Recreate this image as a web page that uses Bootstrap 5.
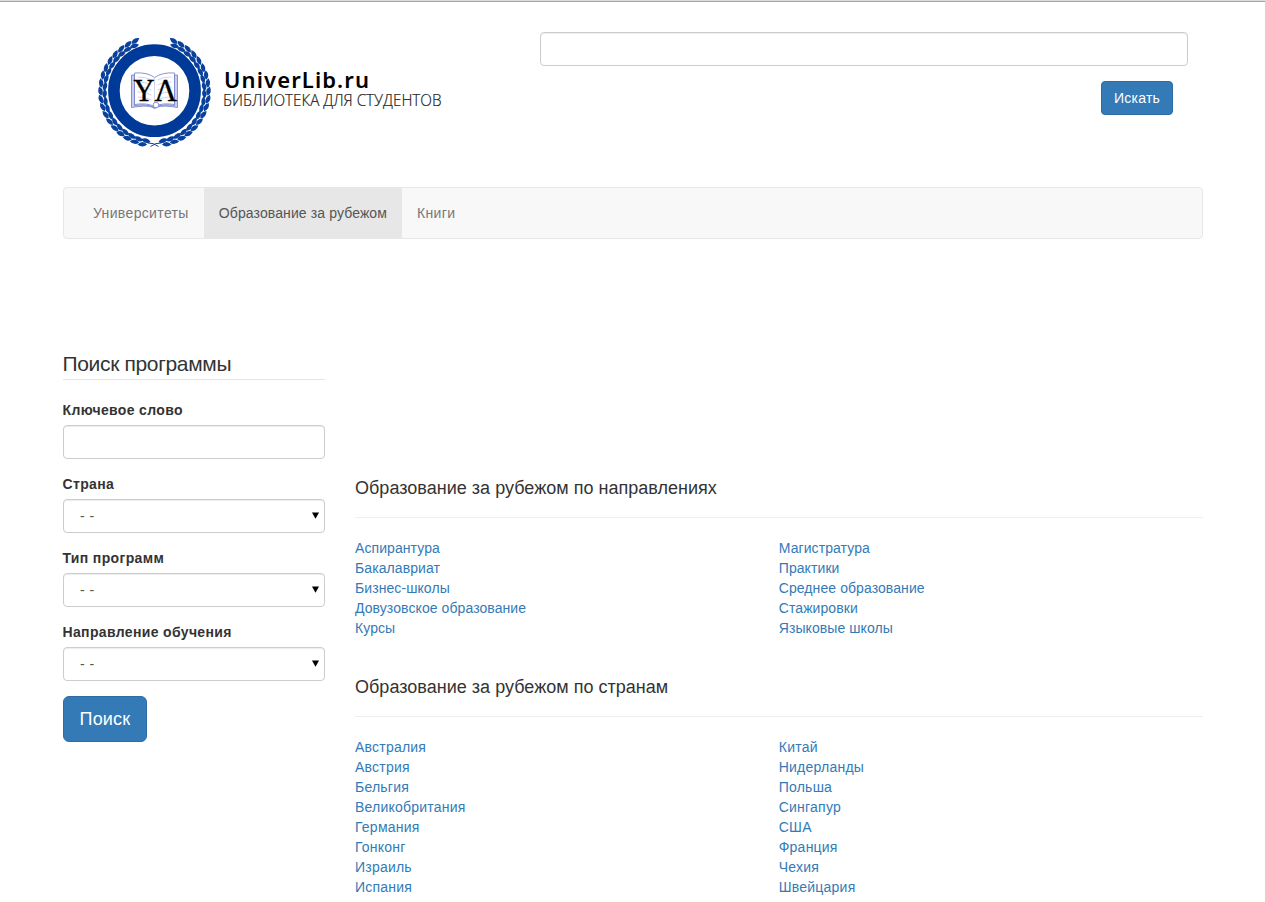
<!DOCTYPE html>
<html lang="ru">
<head>
<meta charset="utf-8">
<title>UniverLib.ru</title>
<meta name="viewport" content="width=device-width, initial-scale=1">
<link href="https://cdn.jsdelivr.net/npm/bootstrap@5.3.0/dist/css/bootstrap.min.css" rel="stylesheet">
<style>
html{overflow:hidden}
body{font:14px/20px "Liberation Sans",Arial,sans-serif;color:#333;letter-spacing:.35px;border-top:1px solid #dcdcdc;height:902px;overflow:hidden}
.topline{height:1px;background:#a5a5a5}
.container{max-width:1170px;--bs-gutter-x:30px}
.site-head{height:185px;padding-top:30px}
.logo{width:400px;height:125px;display:block}
.search-col{width:678px}
.search-field{padding:0 14.5px 0 15px}
.search-action{margin-top:15px;padding-right:29.5px}
.form-control,.form-select{height:34px;font-size:14px;line-height:20px;padding:6px 12px;border:1px solid #ccc;border-radius:4px;box-shadow:inset 0 1px 1px rgba(0,0,0,.075);color:#555}
.form-select{padding-left:16.500px;word-spacing:1px;background-image:url("data:image/svg+xml,%3Csvg xmlns='http://www.w3.org/2000/svg' viewBox='0 0 7 7'%3E%3Cpath d='M0 .5h7L3.5 6.8z'/%3E%3C/svg%3E");background-size:7px 7px;background-position:right 5px top 12px}
.btn-primary{--bs-btn-bg:#337ab7;--bs-btn-border-color:#2e6da4;font-size:14px;line-height:20px;padding:6px 12px;border-radius:4px;letter-spacing:.2px}
.btn-primary.btn-lg{font-size:18px;line-height:24px;padding:10px 16px;border-radius:6px;width:84px;height:46px;letter-spacing:.2px}
.main-nav{height:52px;background:#f8f8f8;border:1px solid #e7e7e7;border-radius:4px;padding:0 14.5px}
.main-nav .nav-link{padding:15px;color:#777;height:50px}
.main-nav .nav-link.active{background:#e7e7e7;color:#555;letter-spacing:.11px}
.content-row{padding-top:112px;--bs-gutter-x:30px}
.side-col{width:292.5px}
.main-col{width:877.5px;padding-top:124px}
h1{font-size:21px;line-height:25px;font-weight:400;border-bottom:1px solid #e5e5e5;height:29px;letter-spacing:-.34px;margin-bottom:20px}
.form-label{font-weight:700;margin-bottom:5px;display:block}
.field{margin-bottom:15px}
h2{font-size:18px;line-height:26px;font-weight:400;margin:0;height:43px;border-bottom:1px solid #eee;letter-spacing:.02px}
.links{margin-top:20px;margin-bottom:36px;letter-spacing:.22px}
.links.programs{letter-spacing:.08px}
.links a{color:#337ab7;text-decoration:none;display:block}
</style>
</head>
<body>
<div class="topline"></div>
<div class="container">
 <header class="site-head d-flex justify-content-between">
  <a href="#" class="ms-4"><svg class="logo" viewBox="86.5 32 400 125">
   <g id="laurel" fill="#0a419c"></g>
   <circle cx="154" cy="90.7" r="40.6" fill="#fff" stroke="#003a99" stroke-width="11.6"/>
   <g stroke="#6f7ac9" stroke-width=".8" fill="#fff">
    <path d="M134 75h-3v32.500q14-2.500 20.500-.5 2.500 3 5 0 7-2 20.500.5V75h-3v30.500q-12-2-20 2-8-4-20-2z" fill="#c9cdf0"/>
    <path d="M134 73q13-1 20 4.500 8-5.500 20-4.500v31.500q-12-2-20 2-8-4-20-2z"/>
    <path d="M154 77.500v29M137 77q7-.5 14 3M137 82q7-.5 14 3M137 87q7-.5 14 3M137 92q7-.5 14 3M137 97q7-.5 14 3M171 77q-7-.5-14 3M171 82q-7-.5-14 3M171 87q-7-.5-14 3M171 92q-7-.5-14 3M171 97q-7-.5-14 3" fill="none" stroke="#c5caea"/>
    <circle cx="155.500" cy="105" r="2.800"/>
   </g>
   <g font-family="Liberation Serif,serif" font-size="31" letter-spacing="0" fill="#000" stroke="#000" stroke-width=".4"><text x="133" y="100.500" textLength="21" lengthAdjust="spacingAndGlyphs">Y</text><text x="154" y="100.500" textLength="22.500" lengthAdjust="spacingAndGlyphs">Λ</text></g>
   <text x="223.500" y="87.500" font-family="Noto Sans,sans-serif" font-weight="600" font-size="22" letter-spacing="1" textLength="146" fill="#000">UniverLib.ru</text>
   <text x="222.500" y="106" font-family="Open Sans,sans-serif" font-weight="300" font-size="15.500" letter-spacing="0" textLength="218.500" lengthAdjust="spacingAndGlyphs" fill="#222" stroke="#222" stroke-width=".2">БИБЛИОТЕКА ДЛЯ СТУДЕНТОВ</text>
  </svg></a>
  <form class="search-col">
   <div class="search-field"><input class="form-control" type="text" aria-label="Поиск"></div>
   <div class="search-action d-flex justify-content-end"><button class="btn btn-primary" type="button">Искать</button></div>
  </form>
 </header>
 <nav class="main-nav d-flex">
  <a class="nav-link" href="#">Университеты</a><a class="nav-link active" href="#">Образование за рубежом</a><a class="nav-link" href="#">Книги</a>
 </nav>
 <div class="row content-row">
  <aside class="side-col">
   <h1>Поиск программы</h1>
   <div class="field"><label class="form-label" for="kw">Ключевое слово</label><input class="form-control" id="kw" type="text"></div>
   <div class="field"><label class="form-label" for="co">Страна</label><select class="form-select" id="co"><option>- -</option></select></div>
   <div class="field"><label class="form-label" for="ty">Тип программ</label><select class="form-select" id="ty"><option>- -</option></select></div>
   <div class="field"><label class="form-label" for="di">Направление обучения</label><select class="form-select" id="di"><option>- -</option></select></div>
   <button class="btn btn-primary btn-lg" type="button">Поиск</button>
  </aside>
  <main class="main-col">
   <h2>Образование за рубежом по направлениях</h2>
   <div class="row g-0 links programs">
    <div class="col-6"><a href="#">Аспирантура</a><a href="#">Бакалавриат</a><a href="#">Бизнес-школы</a><a href="#">Довузовское образование</a><a href="#">Курсы</a></div>
    <div class="col-6"><a href="#">Магистратура</a><a href="#">Практики</a><a href="#">Среднее образование</a><a href="#">Стажировки</a><a href="#">Языковые школы</a></div>
   </div>
   <h2>Образование за рубежом по странам</h2>
   <div class="row g-0 links mb-0">
    <div class="col-6"><a href="#">Австралия</a><a href="#">Австрия</a><a href="#">Бельгия</a><a href="#">Великобритания</a><a href="#">Германия</a><a href="#">Гонконг</a><a href="#">Израиль</a><a href="#">Испания</a></div>
    <div class="col-6"><a href="#">Китай</a><a href="#">Нидерланды</a><a href="#">Польша</a><a href="#">Сингапур</a><a href="#">США</a><a href="#">Франция</a><a href="#">Чехия</a><a href="#">Швейцария</a></div>
   </div>
  </main>
 </div>
</div>
<script src="https://cdn.jsdelivr.net/npm/bootstrap@5.3.0/dist/js/bootstrap.bundle.min.js"></script>
<script>
// Laurel wreath: paired leaves climbing both sides of the ring
const leaf = 'M0 0Q-4.500-5 1-9.500Q4.500-4 0 0z';
let out = '';
for (const side of [-1, 1]) {
  let half = '';
  for (let a = 8; a < 156; a += 8.6) {
    half += `<g transform="rotate(${-a}) translate(0 51.800) rotate(90)"><path d="${leaf}" transform="translate(1.600 0) rotate(2)"/><path d="${leaf}" transform="translate(-1.300 3) scale(-1 1) rotate(4)"/></g>`;
  }
  out += `<g transform="translate(154 91.500) scale(${side} 1)">${half}<path d="M-4 55Q1 51 7 51.500" fill="none" stroke="#0a419c" stroke-width="1"/></g>`;
}
document.getElementById('laurel').innerHTML = out;
</script>
</body>
</html>
